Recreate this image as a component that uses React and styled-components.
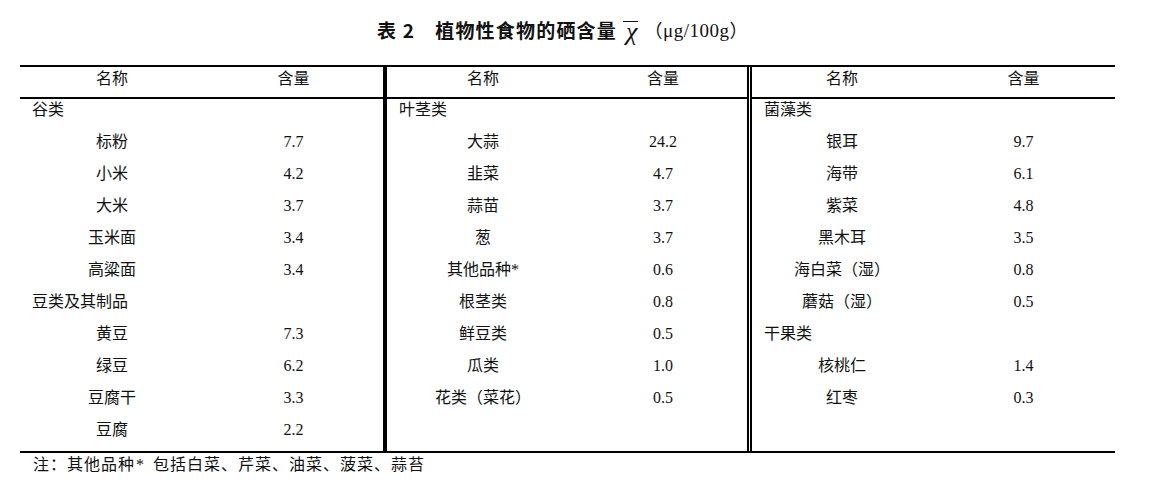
import React from "react";
import styled, { createGlobalStyle } from "styled-components";

const GlobalStyle = createGlobalStyle`
  body {
    margin: 0;
    background: #fff;
    color: #111;
    font-family: "Liberation Serif", "Noto Sans CJK SC", serif;
  }
`;

const Page = styled.div`
  width: 1156px;
  height: 485px;
  padding: 16px 41px 0 20px;
  box-sizing: border-box;
`;

const Title = styled.div`
  display: flex;
  justify-content: center;
  align-items: center;
  height: 26px;
  padding-right: 10px;
  font-family: "Noto Sans CJK SC", sans-serif;
  font-weight: 700;
  font-size: 19px;
  letter-spacing: 1.2px;
`;

const TableNo = styled.span`
  margin-right: 20px;
`;

const Chi = styled.span`
  font-family: "Liberation Serif", serif;
  font-style: italic;
  font-weight: 400;
  font-size: 26px;
  line-height: 20px;
  margin: 0 6px 0 6px;
  padding: 0 1px 0 3px;
  letter-spacing: 0;
  border-top: 1.5px solid #111;
  position: relative;
  top: 2px;
`;

const Unit = styled.span`
  font-family: "Liberation Serif", serif;
  font-weight: 400;
  font-size: 19px;
  letter-spacing: 0.5px;
`;

const Paren = styled.span`
  font-family: "Noto Sans CJK SC", sans-serif;
  font-weight: 400;
  font-size: 18px;
`;

const Table = styled.div`
  display: flex;
  margin-top: 23px;
  border-top: 2px solid #000;
  border-bottom: 2px solid #000;
`;

const Column = styled.div`
  width: ${(p) => p.w}px;
  display: flex;
  flex-direction: column;
`;

const ThickRule = styled.div`
  width: 4px;
  background: #000;
`;

const DoubleRule = styled.div`
  width: 1px;
  border-left: 2px solid #000;
  border-right: 2px solid #000;
`;

const Header = styled.div`
  display: grid;
  grid-template-columns: ${(p) => p.split}px 1fr;
  height: 30px;
  line-height: 24px;
  font-size: 16px;
  text-align: center;
  border-bottom: 2px solid #000;
`;

const Body = styled.div`
  display: flex;
  flex-direction: column;
`;

const Row = styled.div`
  display: grid;
  grid-template-columns: ${(p) => p.split}px 1fr;
  height: 32px;
  line-height: 22px;
  font-size: 16px;
  text-align: center;
`;

const Category = styled.div`
  height: 32px;
  line-height: 22px;
  font-size: 16px;
  padding-left: 12px;
`;

const Note = styled.div`
  padding-left: 13px;
  margin-top: 1px;
  line-height: 22px;
  font-size: 16px;
  letter-spacing: 1px;
`;

const Star = styled.span`
  margin: 0 8px 0 1px;
`;

const columns = [
  {
    w: 363,
    split: 184,
    rows: [
      ["谷类"],
      ["标粉", "7.7"],
      ["小米", "4.2"],
      ["大米", "3.7"],
      ["玉米面", "3.4"],
      ["高粱面", "3.4"],
      ["豆类及其制品"],
      ["黄豆", "7.3"],
      ["绿豆", "6.2"],
      ["豆腐干", "3.3"],
      ["豆腐", "2.2"],
    ],
  },
  {
    w: 360,
    split: 192,
    rows: [
      ["叶茎类"],
      ["大蒜", "24.2"],
      ["韭菜", "4.7"],
      ["蒜苗", "3.7"],
      ["葱", "3.7"],
      ["其他品种*", "0.6"],
      ["根茎类", "0.8"],
      ["鲜豆类", "0.5"],
      ["瓜类", "1.0"],
      ["花类（菜花）", "0.5"],
    ],
  },
  {
    w: 363,
    split: 180,
    rows: [
      ["菌藻类"],
      ["银耳", "9.7"],
      ["海带", "6.1"],
      ["紫菜", "4.8"],
      ["黑木耳", "3.5"],
      ["海白菜（湿）", "0.8"],
      ["蘑菇（湿）", "0.5"],
      ["干果类"],
      ["核桃仁", "1.4"],
      ["红枣", "0.3"],
    ],
  },
];

const FoodColumn = ({ w, split, rows }) => (
  <Column w={w}>
    <Header split={split}>
      <div>名称</div>
      <div>含量</div>
    </Header>
    <Body>
      {rows.map((r, i) =>
        r.length === 1 ? (
          <Category key={i}>{r[0]}</Category>
        ) : (
          <Row key={i} split={split}>
            <div>{r[0]}</div>
            <div>{r[1]}</div>
          </Row>
        )
      )}
    </Body>
  </Column>
);

const App = () => {
  return (
    <Page>
      <GlobalStyle />
      <Title>
        <TableNo>表 2</TableNo>
        植物性食物的硒含量
        <Chi>χ</Chi>
        <Unit>
          <Paren>（</Paren>μg/100g<Paren>）</Paren>
        </Unit>
      </Title>
      <Table>
        <FoodColumn {...columns[0]} />
        <ThickRule />
        <FoodColumn {...columns[1]} />
        <DoubleRule />
        <FoodColumn {...columns[2]} />
      </Table>
      <Note>
        注：其他品种<Star>*</Star>包括白菜、芹菜、油菜、菠菜、蒜苔
      </Note>
    </Page>
  );
};

export default App;
